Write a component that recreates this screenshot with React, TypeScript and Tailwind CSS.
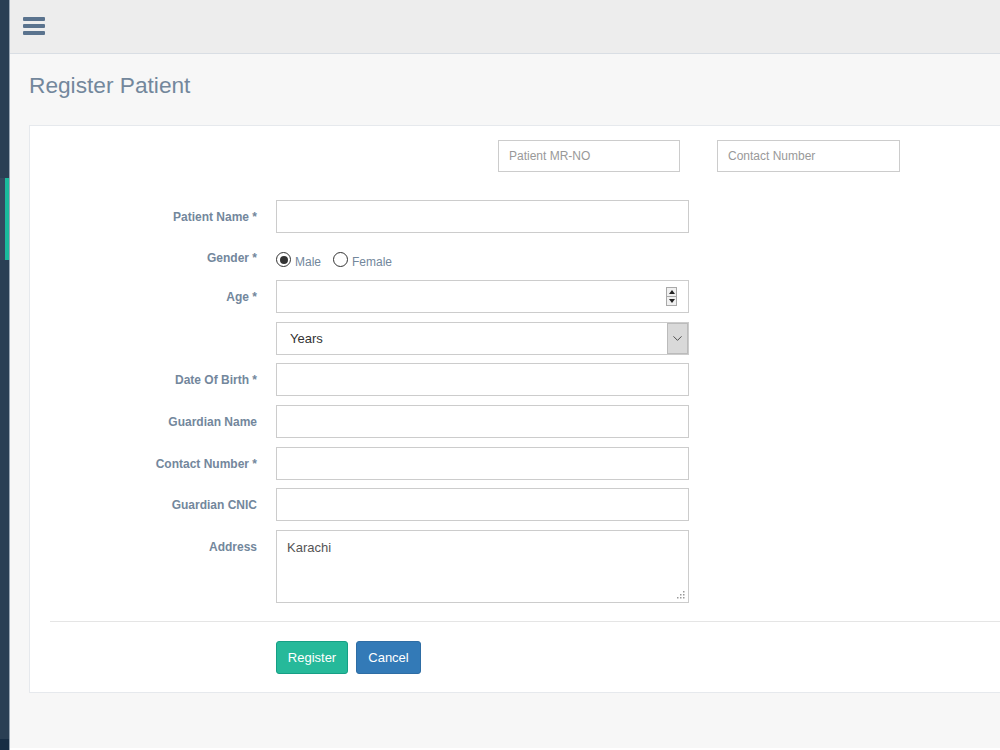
import { ChevronDown } from "lucide-react";

const FONT = { fontFamily: '"Liberation Sans", Arial, sans-serif' };

function Label({ text, top = false }: { text: string; top?: boolean }) {
  return (
    <div
      className={`w-[207px] shrink-0 text-right text-[12px] font-bold leading-4 text-[#73879c] ${
        top ? "pt-[9px] self-start" : ""
      }`}
    >
      {text}
    </div>
  );
}

function Field({ label, mt, children }: { label: string; mt: string; children?: React.ReactNode }) {
  return (
    <div className={`flex items-center ${mt}`}>
      <Label text={label} />
      <div className="ml-[19px] w-[413px] h-[33px] border border-[#ccc] bg-white relative">{children}</div>
    </div>
  );
}

function Radio({ checked, label }: { checked?: boolean; label: string }) {
  return (
    <div className="flex items-start">
      <span className="w-[15px] h-[15px] rounded-full border-[1.5px] border-[#333] bg-white flex items-center justify-center">
        {checked && <span className="w-[8px] h-[8px] rounded-full bg-[#333]" />}
      </span>
      <span className="ml-[4px] mt-[2px] text-[12px] leading-4 text-[#73879c]">{label}</span>
    </div>
  );
}

export default function App() {
  return (
    <div className="flex h-[750px] w-[1000px] overflow-hidden" style={FONT}>
      {/* Sidebar strip */}
      <div className="w-[10px] shrink-0 flex flex-col bg-[#2a3f54] border-r border-[#9aa7b4]">
        <div className="h-[178px]" />
        <div className="h-[82px] flex">
          <div className="w-[5px] bg-[#34495e]" />
          <div className="flex-1 bg-[#1abb9c]" />
        </div>
        <div className="flex-1" />
        <div className="h-[11px] bg-[#172d44]" />
      </div>

      {/* Main */}
      <div className="flex-1 flex flex-col bg-[#f7f7f7]">
        {/* Top nav */}
        <div className="h-[54px] shrink-0 bg-[#ededed] border-b border-[#d9dee4] flex items-center pl-[13px]">
          <div className="flex flex-col gap-[3px] mt-[-1px]">
            <div className="w-[22px] h-1 bg-[#5a738e] rounded-[1px]" />
            <div className="w-[22px] h-1 bg-[#5a738e] rounded-[1px]" />
            <div className="w-[22px] h-1 bg-[#5a738e] rounded-[1px]" />
          </div>
        </div>

        {/* Page title */}
        <div className="pl-[19px] pt-[20px] pb-[28px]">
          <h3 className="text-[22.7px] leading-[23px] font-normal text-[#73879c]">Register Patient</h3>
        </div>

        {/* Panel */}
        <div className="ml-[19px] mr-[-20px] bg-white border border-[#e6e9ed] pt-[14px] pb-[18px] pl-[20px]">
          {/* Search row */}
          <div className="flex pl-[448px] gap-[37px]">
            <div className="w-[182px] h-[32px] border border-[#ccc] flex items-center pl-[10px] text-[12px] text-[#999]">
              Patient MR-NO
            </div>
            <div className="w-[183px] h-[32px] border border-[#ccc] flex items-center pl-[10px] text-[12px] text-[#999]">
              Contact Number
            </div>
          </div>

          <Field label="Patient Name *" mt="mt-[28px]" />

          {/* Gender */}
          <div className="flex h-[47px]">
            <div className="pt-[17px]">
              <Label text="Gender *" />
            </div>
            <div className="ml-[19px] pt-[19px] flex gap-[12px]">
              <Radio checked label="Male" />
              <Radio label="Female" />
            </div>
          </div>

          <Field label="Age *" mt="mt-0">
            <div className="absolute right-[11px] top-[6px] w-[11px] h-[19px] border border-[#a9a9a9] bg-[#f0f0f0] flex flex-col">
              <div className="flex-1 flex items-center justify-center border-b border-[#a9a9a9]">
                <span className="w-0 h-0 border-l-[3px] border-r-[3px] border-b-[4px] border-l-transparent border-r-transparent border-b-[#222]" />
              </div>
              <div className="flex-1 flex items-center justify-center">
                <span className="w-0 h-0 border-l-[3px] border-r-[3px] border-t-[4px] border-l-transparent border-r-transparent border-t-[#222]" />
              </div>
            </div>
          </Field>

          {/* Years select */}
          <div className="flex items-center mt-[9px]">
            <div className="w-[207px] shrink-0" />
            <div className="ml-[19px] w-[413px] h-[33px] border border-[#ccc] bg-white flex items-center">
              <span className="pl-[13px] flex-1 text-[13px] text-[#333]">Years</span>
              <div className="w-[21px] h-full bg-[#d9d9d9] border border-[#bbb] flex items-center justify-center">
                <ChevronDown size={15} strokeWidth={1.5} className="text-[#444]" />
              </div>
            </div>
          </div>

          <Field label="Date Of Birth *" mt="mt-[8px]" />
          <Field label="Guardian Name" mt="mt-[9px]" />
          <Field label="Contact Number *" mt="mt-[9px]" />
          <Field label="Guardian CNIC" mt="mt-[8px]" />

          {/* Address */}
          <div className="flex mt-[9px]">
            <Label text="Address" top />
            <div className="ml-[19px] w-[413px] h-[73px] border border-[#ccc] bg-white relative pl-[10px] pt-[4px]">
              <span className="text-[13px] leading-[18px] text-[#555]">Karachi</span>
              <svg className="absolute right-[3px] bottom-[3px]" width="8" height="8" viewBox="0 0 8 8">
                <rect x="6" y="0" width="1.5" height="1.5" fill="#999" />
                <rect x="3" y="3" width="1.5" height="1.5" fill="#999" />
                <rect x="6" y="3" width="1.5" height="1.5" fill="#999" />
                <rect x="0" y="6" width="1.5" height="1.5" fill="#999" />
                <rect x="3" y="6" width="1.5" height="1.5" fill="#999" />
                <rect x="6" y="6" width="1.5" height="1.5" fill="#999" />
              </svg>
            </div>
          </div>

          <div className="mt-[18px] h-px bg-[#e5e5e5]" />

          {/* Actions */}
          <div className="flex gap-[8px] mt-[19px] pl-[226px]">
            <button className="h-[33px] w-[72px] rounded-[3px] bg-[#26b99a] border border-[#169f85] text-white text-[13px]">
              Register
            </button>
            <button className="h-[33px] w-[65px] rounded-[3px] bg-[#337ab7] border border-[#2e6da4] text-white text-[13px]">
              Cancel
            </button>
          </div>
        </div>

        <div className="flex-1" />
        <div className="h-[2px] bg-white" />
      </div>
    </div>
  );
}
